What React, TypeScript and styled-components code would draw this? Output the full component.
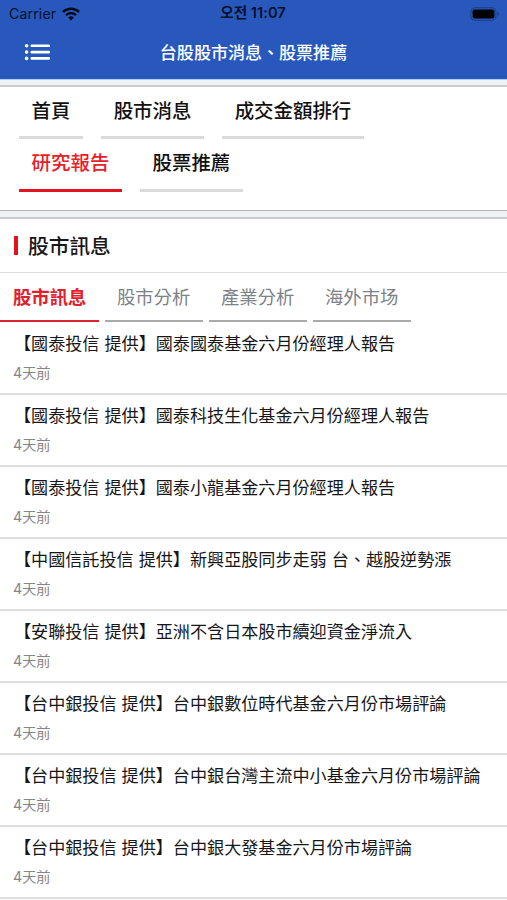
import React from "react";
import styled, { createGlobalStyle, css } from "styled-components";

const GlobalStyle = createGlobalStyle`
  * { box-sizing: border-box; }
  body {
    margin: 0;
    background: #fff;
    overflow: hidden;
    font-family: "Noto Sans CJK TC", "Noto Sans CJK KR", sans-serif;
  }
`;

const Screen = styled.main`
  width: 507px;
  height: 900px;
  overflow: hidden;
  background: #fff;
  color: #17171a;
`;

const Header = styled.header`
  height: 79px;
  background: #2858bb;
`;

const StatusBar = styled.div`
  display: grid;
  grid-template-columns: 1fr auto 1fr;
  align-items: center;
  height: 27px;
  padding: 0 7px 0 9px;
  color: #06102c;
`;

const Carrier = styled.div`
  display: flex;
  align-items: center;
  gap: 6px;
  font: 400 14.2px/27px Inter, sans-serif;
  letter-spacing: 0.1px;
`;

const Clock = styled.div`
  margin-right: 3px;
  font: 600 14.7px/27px Inter, "Noto Sans CJK KR", sans-serif;
`;

const BatteryBox = styled.div`
  display: flex;
  justify-content: flex-end;
`;

const TitleBar = styled.div`
  display: grid;
  grid-template-columns: 74px 1fr 74px;
  align-items: center;
  height: 50px;
`;

const MenuButton = styled.button`
  display: flex;
  padding: 0 0 0 24px;
  border: 0;
  background: none;
`;

const PageTitle = styled.h1`
  margin: 0;
  text-align: center;
  white-space: nowrap;
  color: #fff;
  font-size: 17.05px;
  font-weight: 500;
  line-height: 50px;
`;

const Divider = styled.div<{ $first?: boolean }>`
  height: ${(p) => (p.$first ? 8 : 9)}px;
  border-top: 1px solid ${(p) => (p.$first ? "#b4caee" : "#b5b5b8")};
  border-bottom: 2px solid #cdcbce;
  background: #f0f1f5;
`;

const MainNav = styled.nav`
  display: flex;
  flex-wrap: wrap;
  align-content: flex-start;
  gap: 0 18px;
  height: 123px;
  padding: 0 40px 0 19px;
`;

const NavItem = styled.a<{ $active?: boolean }>`
  height: 52.4px;
  padding: 0 12.6px;
  border-bottom: 3px solid ${(p) => (p.$active ? "#e3141f" : "#dadada")};
  color: ${(p) => (p.$active ? "#e92029" : "#111")};
  font-size: 19.45px;
  font-weight: 500;
  line-height: 46px;
`;

const SectionTitle = styled.h2`
  display: flex;
  align-items: center;
  gap: 10px;
  height: 54px;
  margin: 0;
  padding: 0 14px;
  border-bottom: 1px solid #dcdcdc;
  font-size: 20.7px;
  font-weight: 500;
  line-height: 50px;

  &::before {
    content: "";
    width: 4px;
    height: 19px;
    background: #e5101c;
  }
`;

const SectionText = styled.span`
  padding-bottom: 2px;
`;

const Tabs = styled.div`
  display: flex;
  gap: 6px;
  height: 49px;
  padding-left: 1px;
`;

const Tab = styled.a<{ $active?: boolean }>`
  width: 98px;
  padding-left: 12px;
  border-bottom: 2px solid #a9a9ab;
  color: #7d8287;
  font-size: 18.35px;
  line-height: 46px;
  white-space: nowrap;
  ${(p) =>
    p.$active &&
    css`
      width: 99px;
      margin: 0 0 0 -1px;
      padding-left: 13px;
      border-color: #dc2431;
      color: #e3202e;
      font-weight: 700;
    `}
`;

const NewsList = styled.ul`
  margin: 0;
  padding: 0;
  list-style: none;
`;

const NewsItem = styled.li`
  height: 72.07px;
  padding: 5px 13px 0 14px;
  border-bottom: 2px solid #dfdfdf;

  &:first-child {
    height: 73px;
    padding-top: 6px;
  }
`;

const Headline = styled.div`
  font-size: 17.1px;
  line-height: 30px;
  word-spacing: 1.2px;
  white-space: nowrap;
`;

const Age = styled.div`
  margin-left: -1px;
  color: #858585;
  font: 400 14.2px/30px Inter, "Noto Sans CJK TC", sans-serif;
`;

const sections = ["首頁", "股市消息", "成交金額排行", "研究報告", "股票推薦"];
const tabs = ["股市訊息", "股市分析", "產業分析", "海外市场"];
const news = [
  "【國泰投信 提供】國泰國泰基金六月份經理人報告",
  "【國泰投信 提供】國泰科技生化基金六月份經理人報告",
  "【國泰投信 提供】國泰小龍基金六月份經理人報告",
  "【中國信託投信 提供】新興亞股同步走弱 台、越股逆勢漲",
  "【安聯投信 提供】亞洲不含日本股市續迎資金淨流入",
  "【台中銀投信 提供】台中銀數位時代基金六月份市場評論",
  "【台中銀投信 提供】台中銀台灣主流中小基金六月份市場評論",
  "【台中銀投信 提供】台中銀大發基金六月份市場評論",
];

const WifiIcon = () => (
  <svg width="18" height="14" viewBox="0 0 18 14" fill="none" stroke="#030817">
    <path d="M.9 4.9a11.7 11.7 0 0 1 16.2 0" strokeWidth="2.5" />
    <path d="M4 8.1a7.2 7.2 0 0 1 10 0" strokeWidth="2.3" />
    <path d="M9 13.5 6.2 10.6a4 4 0 0 1 5.6 0Z" fill="#030817" stroke="none" />
  </svg>
);

const BatteryIcon = () => (
  <svg width="30" height="14" viewBox="0 0 30 14">
    <rect x=".9" y=".7" width="25" height="12.6" rx="3.6" fill="none" stroke="#1b3e86" />
    <rect x="2.6" y="2.5" width="21.8" height="9" rx="2" fill="#000" />
    <path d="M27.4 5v4q1.6-.7 1.6-2t-1.6-2Z" fill="#1b3e86" />
  </svg>
);

const MenuIcon = () => (
  <svg width="27" height="18" viewBox="0 0 27 18" fill="#fff">
    {[2.8, 9.1, 15.4].map((y) => (
      <g key={y}>
        <circle cx="2.6" cy={y} r="1.8" />
        <rect x="6.5" y={y - 1.3} width="19.5" height="2.6" rx="1.2" />
      </g>
    ))}
  </svg>
);

export default function App() {
  return (
    <Screen>
      <GlobalStyle />
      <Header>
        <StatusBar>
          <Carrier>
            Carrier
            <WifiIcon />
          </Carrier>
          <Clock>오전 11:07</Clock>
          <BatteryBox>
            <BatteryIcon />
          </BatteryBox>
        </StatusBar>
        <TitleBar>
          <MenuButton>
            <MenuIcon />
          </MenuButton>
          <PageTitle>台股股市消息、股票推薦</PageTitle>
        </TitleBar>
      </Header>
      <Divider $first />
      <MainNav>
        {sections.map((name) => (
          <NavItem key={name} $active={name === "研究報告"}>
            {name}
          </NavItem>
        ))}
      </MainNav>
      <Divider />
      <SectionTitle>
        <SectionText>股市訊息</SectionText>
      </SectionTitle>
      <Tabs>
        {tabs.map((name, i) => (
          <Tab key={name} $active={i === 0}>
            {name}
          </Tab>
        ))}
      </Tabs>
      <NewsList>
        {news.map((title) => (
          <NewsItem key={title}>
            <Headline>{title}</Headline>
            <Age>4天前</Age>
          </NewsItem>
        ))}
      </NewsList>
    </Screen>
  );
}
